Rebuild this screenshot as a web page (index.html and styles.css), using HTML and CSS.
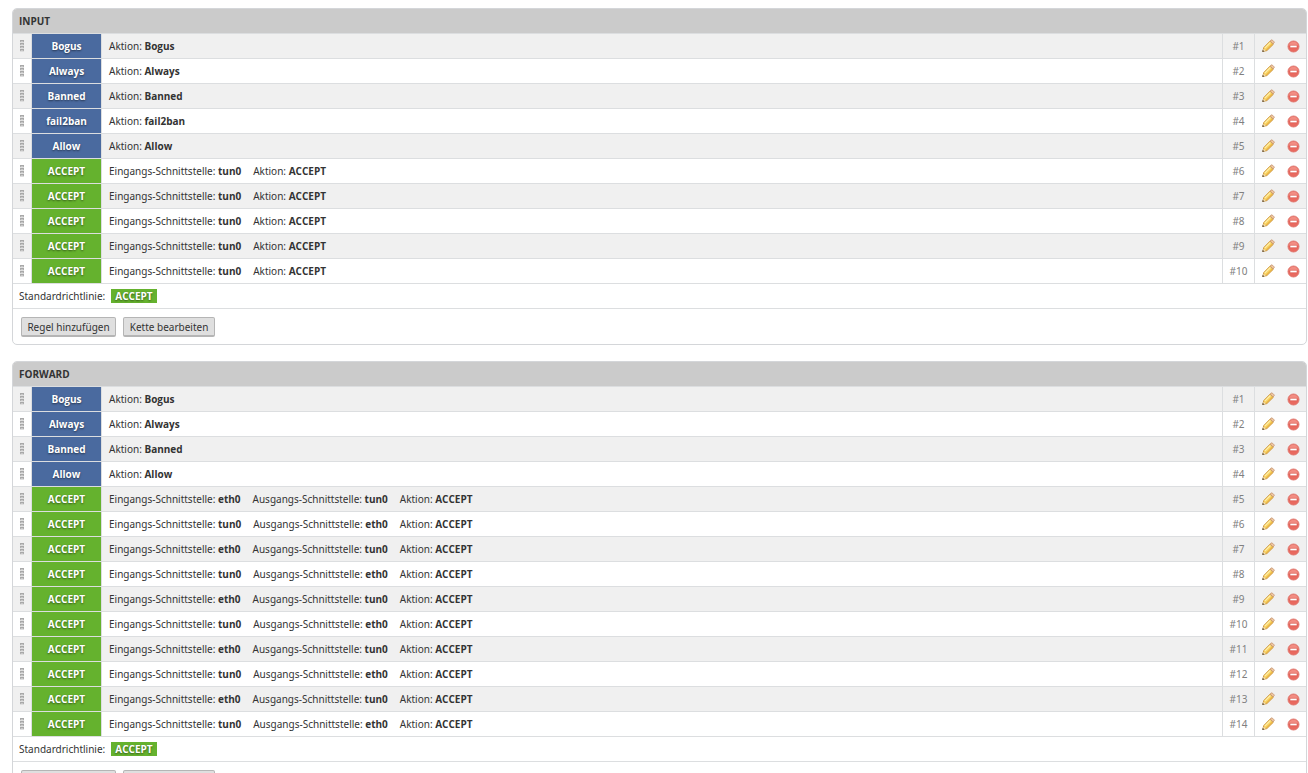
FILE: index.html
```html
<!DOCTYPE html>
<html lang="de">
<head>
<meta charset="utf-8">
<title>Firewall-Regeln</title>
<link rel="stylesheet" href="styles.css">
</head>
<body>
<svg class="sprite" aria-hidden="true">
  <defs>
    <symbol id="grip" viewBox="0 0 4 12">
      <path fill="#dedede" d="M0 0h4v12H0z"/>
      <path fill="#b0b0b0" d="M0 1h1v1H0zM3 1h1v1H3zM0 4h1v1H0zM3 4h1v1H3zM0 7h1v1H0zM3 7h1v1H3zM0 10h1v1H0zM3 10h1v1H3z"/>
      <path fill="#a8a8a8" d="M0 0h4v1H0zM0 3h4v1H0zM0 6h4v1H0zM0 9h4v1H0z"/>
      <path fill="#c8c8c8" d="M1 1h2v1H1zM1 4h2v1H1zM1 7h2v1H1zM1 10h2v1H1z"/>
    </symbol>
    <symbol id="pencil" viewBox="0 0 16 16">
      <path fill="#f8d060" stroke="#c88f35" stroke-width=".9" d="M2.800 13.400l1-3.900 6.200-6.300 3.200 3.200-6.300 6.200z"/>
      <path fill="none" stroke="#fff0a8" stroke-width="1.200" d="M4.800 10.100l5.600-5.600"/>
      <path fill="none" stroke="#e6ac3c" d="M6.400 12l6-6"/>
      <path fill="#f2c9a4" stroke="#c0906a" stroke-width=".8" d="M10.200 3l.9-.9q.7-.6 1.500.2l1.300 1.300q.7.700.1 1.400l-.9.900z"/>
      <path fill="#f3dfba" d="M3.600 10.700l2 2-2.500.6z"/>
      <path fill="#5d503c" d="M2.200 14l.6-2.200 1.600 1.600z"/>
    </symbol>
    <symbol id="remove" viewBox="0 0 16 16">
      <circle cx="8.500" cy="8.500" r="5.500" fill="#e9695f" stroke="#e07a72"/>
      <path fill="#f28d83" d="M4 7.500a4.600 4.600 0 0 1 9 0z"/>
      <path fill="#fff" stroke="#d6584e" stroke-width=".6" d="M5 7.300h7v2.400H5z"/>
    </symbol>
  </defs>
</svg>
<main class="page">
  <section class="panel">
    <h2 class="panel-title">INPUT</h2>
    <table class="rules">
      <tbody>
        <tr><td class="grip"><svg><use href="#grip"/></svg></td><td class="tag chain">Bogus</td><td class="rule"><span>Aktion: <b>Bogus</b></span></td><td class="num">#1</td><td class="tools"><div><button aria-label="Bearbeiten"><svg><use href="#pencil"/></svg></button><button aria-label="Entfernen"><svg><use href="#remove"/></svg></button></div></td></tr>
        <tr><td class="grip"><svg><use href="#grip"/></svg></td><td class="tag chain">Always</td><td class="rule"><span>Aktion: <b>Always</b></span></td><td class="num">#2</td><td class="tools"><div><button aria-label="Bearbeiten"><svg><use href="#pencil"/></svg></button><button aria-label="Entfernen"><svg><use href="#remove"/></svg></button></div></td></tr>
        <tr><td class="grip"><svg><use href="#grip"/></svg></td><td class="tag chain">Banned</td><td class="rule"><span>Aktion: <b>Banned</b></span></td><td class="num">#3</td><td class="tools"><div><button aria-label="Bearbeiten"><svg><use href="#pencil"/></svg></button><button aria-label="Entfernen"><svg><use href="#remove"/></svg></button></div></td></tr>
        <tr><td class="grip"><svg><use href="#grip"/></svg></td><td class="tag chain">fail2ban</td><td class="rule"><span>Aktion: <b>fail2ban</b></span></td><td class="num">#4</td><td class="tools"><div><button aria-label="Bearbeiten"><svg><use href="#pencil"/></svg></button><button aria-label="Entfernen"><svg><use href="#remove"/></svg></button></div></td></tr>
        <tr><td class="grip"><svg><use href="#grip"/></svg></td><td class="tag chain">Allow</td><td class="rule"><span>Aktion: <b>Allow</b></span></td><td class="num">#5</td><td class="tools"><div><button aria-label="Bearbeiten"><svg><use href="#pencil"/></svg></button><button aria-label="Entfernen"><svg><use href="#remove"/></svg></button></div></td></tr>
        <tr><td class="grip"><svg><use href="#grip"/></svg></td><td class="tag accept">ACCEPT</td><td class="rule"><span>Eingangs-Schnittstelle: <b>tun0</b></span><span>Aktion: <b>ACCEPT</b></span></td><td class="num">#6</td><td class="tools"><div><button aria-label="Bearbeiten"><svg><use href="#pencil"/></svg></button><button aria-label="Entfernen"><svg><use href="#remove"/></svg></button></div></td></tr>
        <tr><td class="grip"><svg><use href="#grip"/></svg></td><td class="tag accept">ACCEPT</td><td class="rule"><span>Eingangs-Schnittstelle: <b>tun0</b></span><span>Aktion: <b>ACCEPT</b></span></td><td class="num">#7</td><td class="tools"><div><button aria-label="Bearbeiten"><svg><use href="#pencil"/></svg></button><button aria-label="Entfernen"><svg><use href="#remove"/></svg></button></div></td></tr>
        <tr><td class="grip"><svg><use href="#grip"/></svg></td><td class="tag accept">ACCEPT</td><td class="rule"><span>Eingangs-Schnittstelle: <b>tun0</b></span><span>Aktion: <b>ACCEPT</b></span></td><td class="num">#8</td><td class="tools"><div><button aria-label="Bearbeiten"><svg><use href="#pencil"/></svg></button><button aria-label="Entfernen"><svg><use href="#remove"/></svg></button></div></td></tr>
        <tr><td class="grip"><svg><use href="#grip"/></svg></td><td class="tag accept">ACCEPT</td><td class="rule"><span>Eingangs-Schnittstelle: <b>tun0</b></span><span>Aktion: <b>ACCEPT</b></span></td><td class="num">#9</td><td class="tools"><div><button aria-label="Bearbeiten"><svg><use href="#pencil"/></svg></button><button aria-label="Entfernen"><svg><use href="#remove"/></svg></button></div></td></tr>
        <tr><td class="grip"><svg><use href="#grip"/></svg></td><td class="tag accept">ACCEPT</td><td class="rule"><span>Eingangs-Schnittstelle: <b>tun0</b></span><span>Aktion: <b>ACCEPT</b></span></td><td class="num">#10</td><td class="tools"><div><button aria-label="Bearbeiten"><svg><use href="#pencil"/></svg></button><button aria-label="Entfernen"><svg><use href="#remove"/></svg></button></div></td></tr>
      </tbody>
    </table>
    <div class="policy">Standardrichtlinie: <span class="badge">ACCEPT</span></div>
    <div class="actions"><button class="btn">Regel hinzufügen</button><button class="btn">Kette bearbeiten</button></div>
  </section>
  <section class="panel">
    <h2 class="panel-title">FORWARD</h2>
    <table class="rules">
      <tbody>
        <tr><td class="grip"><svg><use href="#grip"/></svg></td><td class="tag chain">Bogus</td><td class="rule"><span>Aktion: <b>Bogus</b></span></td><td class="num">#1</td><td class="tools"><div><button aria-label="Bearbeiten"><svg><use href="#pencil"/></svg></button><button aria-label="Entfernen"><svg><use href="#remove"/></svg></button></div></td></tr>
        <tr><td class="grip"><svg><use href="#grip"/></svg></td><td class="tag chain">Always</td><td class="rule"><span>Aktion: <b>Always</b></span></td><td class="num">#2</td><td class="tools"><div><button aria-label="Bearbeiten"><svg><use href="#pencil"/></svg></button><button aria-label="Entfernen"><svg><use href="#remove"/></svg></button></div></td></tr>
        <tr><td class="grip"><svg><use href="#grip"/></svg></td><td class="tag chain">Banned</td><td class="rule"><span>Aktion: <b>Banned</b></span></td><td class="num">#3</td><td class="tools"><div><button aria-label="Bearbeiten"><svg><use href="#pencil"/></svg></button><button aria-label="Entfernen"><svg><use href="#remove"/></svg></button></div></td></tr>
        <tr><td class="grip"><svg><use href="#grip"/></svg></td><td class="tag chain">Allow</td><td class="rule"><span>Aktion: <b>Allow</b></span></td><td class="num">#4</td><td class="tools"><div><button aria-label="Bearbeiten"><svg><use href="#pencil"/></svg></button><button aria-label="Entfernen"><svg><use href="#remove"/></svg></button></div></td></tr>
        <tr><td class="grip"><svg><use href="#grip"/></svg></td><td class="tag accept">ACCEPT</td><td class="rule"><span>Eingangs-Schnittstelle: <b>eth0</b></span><span>Ausgangs-Schnittstelle: <b>tun0</b></span><span>Aktion: <b>ACCEPT</b></span></td><td class="num">#5</td><td class="tools"><div><button aria-label="Bearbeiten"><svg><use href="#pencil"/></svg></button><button aria-label="Entfernen"><svg><use href="#remove"/></svg></button></div></td></tr>
        <tr><td class="grip"><svg><use href="#grip"/></svg></td><td class="tag accept">ACCEPT</td><td class="rule"><span>Eingangs-Schnittstelle: <b>tun0</b></span><span>Ausgangs-Schnittstelle: <b>eth0</b></span><span>Aktion: <b>ACCEPT</b></span></td><td class="num">#6</td><td class="tools"><div><button aria-label="Bearbeiten"><svg><use href="#pencil"/></svg></button><button aria-label="Entfernen"><svg><use href="#remove"/></svg></button></div></td></tr>
        <tr><td class="grip"><svg><use href="#grip"/></svg></td><td class="tag accept">ACCEPT</td><td class="rule"><span>Eingangs-Schnittstelle: <b>eth0</b></span><span>Ausgangs-Schnittstelle: <b>tun0</b></span><span>Aktion: <b>ACCEPT</b></span></td><td class="num">#7</td><td class="tools"><div><button aria-label="Bearbeiten"><svg><use href="#pencil"/></svg></button><button aria-label="Entfernen"><svg><use href="#remove"/></svg></button></div></td></tr>
        <tr><td class="grip"><svg><use href="#grip"/></svg></td><td class="tag accept">ACCEPT</td><td class="rule"><span>Eingangs-Schnittstelle: <b>tun0</b></span><span>Ausgangs-Schnittstelle: <b>eth0</b></span><span>Aktion: <b>ACCEPT</b></span></td><td class="num">#8</td><td class="tools"><div><button aria-label="Bearbeiten"><svg><use href="#pencil"/></svg></button><button aria-label="Entfernen"><svg><use href="#remove"/></svg></button></div></td></tr>
        <tr><td class="grip"><svg><use href="#grip"/></svg></td><td class="tag accept">ACCEPT</td><td class="rule"><span>Eingangs-Schnittstelle: <b>eth0</b></span><span>Ausgangs-Schnittstelle: <b>tun0</b></span><span>Aktion: <b>ACCEPT</b></span></td><td class="num">#9</td><td class="tools"><div><button aria-label="Bearbeiten"><svg><use href="#pencil"/></svg></button><button aria-label="Entfernen"><svg><use href="#remove"/></svg></button></div></td></tr>
        <tr><td class="grip"><svg><use href="#grip"/></svg></td><td class="tag accept">ACCEPT</td><td class="rule"><span>Eingangs-Schnittstelle: <b>tun0</b></span><span>Ausgangs-Schnittstelle: <b>eth0</b></span><span>Aktion: <b>ACCEPT</b></span></td><td class="num">#10</td><td class="tools"><div><button aria-label="Bearbeiten"><svg><use href="#pencil"/></svg></button><button aria-label="Entfernen"><svg><use href="#remove"/></svg></button></div></td></tr>
        <tr><td class="grip"><svg><use href="#grip"/></svg></td><td class="tag accept">ACCEPT</td><td class="rule"><span>Eingangs-Schnittstelle: <b>eth0</b></span><span>Ausgangs-Schnittstelle: <b>tun0</b></span><span>Aktion: <b>ACCEPT</b></span></td><td class="num">#11</td><td class="tools"><div><button aria-label="Bearbeiten"><svg><use href="#pencil"/></svg></button><button aria-label="Entfernen"><svg><use href="#remove"/></svg></button></div></td></tr>
        <tr><td class="grip"><svg><use href="#grip"/></svg></td><td class="tag accept">ACCEPT</td><td class="rule"><span>Eingangs-Schnittstelle: <b>tun0</b></span><span>Ausgangs-Schnittstelle: <b>eth0</b></span><span>Aktion: <b>ACCEPT</b></span></td><td class="num">#12</td><td class="tools"><div><button aria-label="Bearbeiten"><svg><use href="#pencil"/></svg></button><button aria-label="Entfernen"><svg><use href="#remove"/></svg></button></div></td></tr>
        <tr><td class="grip"><svg><use href="#grip"/></svg></td><td class="tag accept">ACCEPT</td><td class="rule"><span>Eingangs-Schnittstelle: <b>eth0</b></span><span>Ausgangs-Schnittstelle: <b>tun0</b></span><span>Aktion: <b>ACCEPT</b></span></td><td class="num">#13</td><td class="tools"><div><button aria-label="Bearbeiten"><svg><use href="#pencil"/></svg></button><button aria-label="Entfernen"><svg><use href="#remove"/></svg></button></div></td></tr>
        <tr><td class="grip"><svg><use href="#grip"/></svg></td><td class="tag accept">ACCEPT</td><td class="rule"><span>Eingangs-Schnittstelle: <b>tun0</b></span><span>Ausgangs-Schnittstelle: <b>eth0</b></span><span>Aktion: <b>ACCEPT</b></span></td><td class="num">#14</td><td class="tools"><div><button aria-label="Bearbeiten"><svg><use href="#pencil"/></svg></button><button aria-label="Entfernen"><svg><use href="#remove"/></svg></button></div></td></tr>
      </tbody>
    </table>
    <div class="policy">Standardrichtlinie: <span class="badge">ACCEPT</span></div>
    <div class="actions"><button class="btn">Regel hinzufügen</button><button class="btn">Kette bearbeiten</button></div>
  </section>
</main>
</body>
</html>
```
FILE: styles.css
```css
* { box-sizing: border-box; }
body {
  margin: 0;
  height: 100vh;
  overflow: hidden;
  background: #fff;
  color: #333;
  font: 10px/16px "Noto Sans", "Open Sans", sans-serif;
}
.sprite { display: none; }
.page {
  display: flex;
  flex-direction: column;
  gap: 16px;
  padding: 8px 1px 16px 12px;
}
.panel {
  flex: none;
  border: 1px solid #d4d6d9;
  border-radius: 5px;
  overflow: hidden;
}
.panel-title {
  margin: -1px -1px 0;
  padding: 5px 7px 4px;
  border-bottom: 1px solid #dcdee0;
  background: #cbcbcb;
  font-size: 10px;
  line-height: 16px;
}
.panel-title, .tag, .badge, b {
  font-family: "Open Sans", sans-serif;
  font-weight: 700;
}
.rules {
  width: 100%;
  border-collapse: separate;
  border-spacing: 0;
}
.rules td {
  height: 25px;
  padding: 0;
  border-bottom: 1px solid #dcdee0;
}
.rules tr:nth-child(odd) { background: #f0f0f0; }
.rules .grip {
  width: 19px;
  min-width: 19px;
  border-right: 1px solid #dcdee0;
  cursor: move;
}
.grip svg {
  display: block;
  width: 4px;
  height: 12px;
  margin-left: 7px;
}
.rules .tag {
  width: 70px;
  min-width: 70px;
  border-right: 1px solid #dcdee0;
  background-clip: padding-box;
  text-align: center;
}
.tag, .badge {
  color: #fff;
  text-shadow: 0 1px 2px rgba(0, 0, 0, .5);
}
.chain { background-color: #4a6a9f; }
.accept, .badge { background-color: #65b22e; }
.rules .rule { padding-left: 7px; }
.rule span { margin-right: 12px; }
.rules .num {
  width: 32px;
  min-width: 32px;
  border-left: 1px solid #dcdee0;
  color: #808080;
  text-align: center;
}
.rules .tools {
  width: 52px;
  min-width: 52px;
  border-left: 1px solid #dcdee0;
}
.tools div {
  display: flex;
  gap: 9px;
  padding-left: 5px;
}
.tools button {
  width: 16px;
  height: 16px;
  padding: 0;
  border: 0;
  background: none;
  cursor: pointer;
}
.tools svg {
  display: block;
  width: 16px;
  height: 16px;
}
.policy {
  display: flex;
  align-items: center;
  gap: 6px;
  height: 25px;
  padding: 0 6px;
  border-bottom: 1px solid #dcdee0;
}
.badge {
  padding: 0 4px;
  line-height: 14px;
}
.actions {
  display: flex;
  gap: 7px;
  padding: 8px 8px 7px;
}
.btn {
  height: 20px;
  padding: 0 5px;
  border: 1px solid #b5b5b5;
  border-bottom-width: 2px;
  border-radius: 2px;
  background: #dfdfdf;
  color: #333;
  font: 10px/16px "Noto Sans", "Open Sans", sans-serif;
}
.btn:first-child { min-width: 95px; }
.btn:last-child { min-width: 92px; }
```
